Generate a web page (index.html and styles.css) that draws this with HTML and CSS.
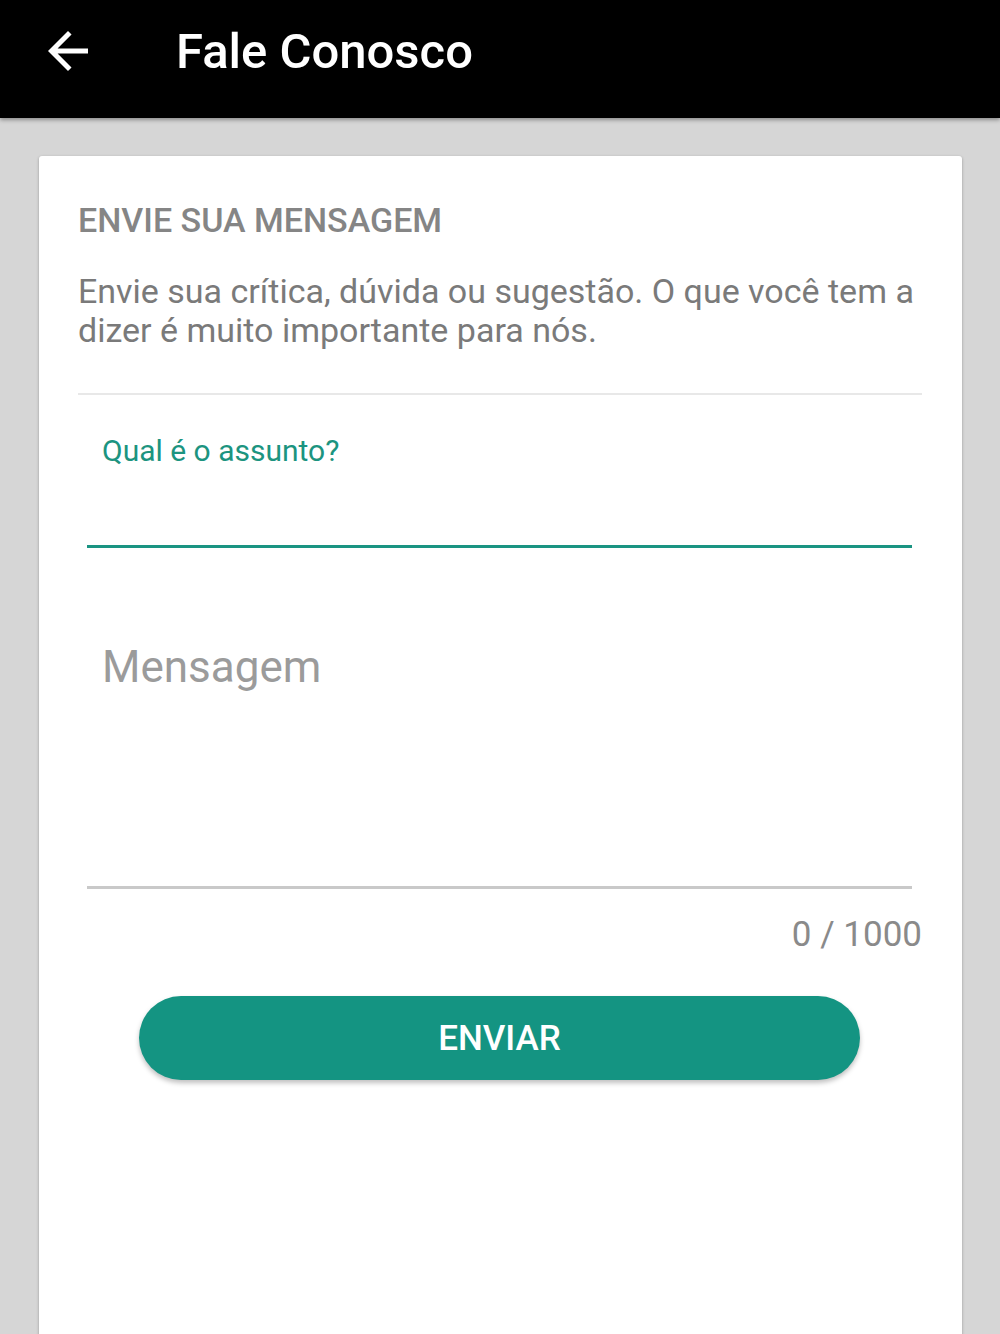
FILE: index.html
```html
<!DOCTYPE html>
<html lang="pt">
<head>
<meta charset="utf-8">
<link rel="stylesheet" href="styles.css">
</head>
<body>
<header class="appbar">
  <svg class="back" viewBox="0 0 24 24" width="60" height="60"><path d="M20 11H7.83l5.59-5.59L12 4l-8 8 8 8 1.41-1.41L7.83 13H20v-2z" fill="#fff"/></svg>
  <h1 class="appbar-title">Fale Conosco</h1>
</header>
<main class="page">
  <section class="card">
    <h2 class="card-title">ENVIE SUA MENSAGEM</h2>
    <p class="card-text">Envie sua crítica, dúvida ou sugestão. O que você tem a dizer é muito importante para nós.</p>
    <hr class="divider">
    <div class="field field-subject">
      <label class="field-label">Qual é o assunto?</label>
      <div class="field-line active"></div>
    </div>
    <div class="field field-message">
      <div class="placeholder">Mensagem</div>
      <div class="field-line"></div>
    </div>
    <div class="counter">0 / 1000</div>
    <div class="actions">
      <button class="btn">ENVIAR</button>
    </div>
  </section>
</main>
</body>
</html>
```
FILE: styles.css
```css
* { box-sizing: border-box; }
html, body { margin: 0; padding: 0; }
body {
  background: #d6d6d6;
  font-family: Roboto, "Noto Sans", sans-serif;
  width: 1000px;
  height: 1334px;
  overflow: hidden;
}
.appbar {
  height: 118px;
  background: #000;
  display: flex;
  align-items: center;
  padding-left: 38px;
  padding-bottom: 16px;
  box-shadow: 0 2px 4px rgba(0,0,0,0.35);
  position: relative;
  z-index: 1;
}
.back { display: block; }
.appbar-title {
  margin: 0 0 0 78px;
  color: #fff;
  font-size: 49px;
  font-weight: 500;
  letter-spacing: 0;
}
.page {
  padding: 38px 38px 0 39px;
}
.card {
  background: #fff;
  min-height: 1200px;
  border-radius: 3px;
  box-shadow: 0 1px 3px rgba(0,0,0,0.3);
  padding: 44px 40px 0 39px;
}
.card-title {
  margin: 0;
  font-size: 34px;
  font-weight: 500;
  color: #858585;
  line-height: 40px;
}
.card-text {
  margin: 32px 0 0;
  font-size: 34px;
  line-height: 39px;
  color: #7a7a7a;
}
.divider {
  border: 0;
  height: 2px;
  background: #e8e8e8;
  margin: 43px 0 0;
}
.field { padding: 0 10px 0 9px; }
.field-subject { padding-top: 38px; }
.field-label {
  display: block;
  padding-left: 15px;
  font-size: 30px;
  line-height: 36px;
  color: #1c9480;
}
.field-line {
  height: 3px;
  background: #c9c9c9;
}
.field-line.active {
  background: #1a9482;
  margin-top: 76px;
}
.field-message { padding-top: 94px; }
.placeholder {
  padding-left: 15px;
  font-size: 44px;
  line-height: 50px;
  color: #9b9b9b;
  height: 244px;
}
.counter {
  text-align: right;
  font-size: 35px;
  line-height: 38px;
  color: #8a8a8a;
  margin-top: 27px;
}
.actions {
  display: flex;
  justify-content: center;
  padding: 42px 62px 0 61px;
}
.btn {
  width: 721px;
  height: 84px;
  border: 0;
  border-radius: 42px;
  background: #149482;
  color: #fff;
  font-family: Roboto, sans-serif;
  font-size: 35px;
  font-weight: 500;
  box-shadow: 0 3px 5px rgba(0,0,0,0.25);
}
```
